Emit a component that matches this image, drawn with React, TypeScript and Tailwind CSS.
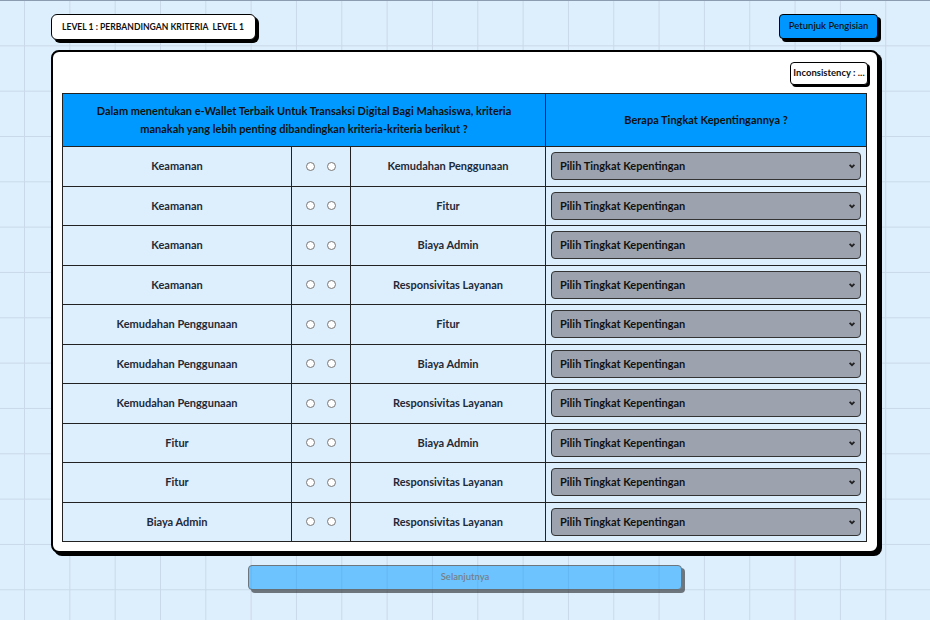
const pairs: [string, string][] = [
  ['Keamanan', 'Kemudahan Penggunaan'],
  ['Keamanan', 'Fitur'],
  ['Keamanan', 'Biaya Admin'],
  ['Keamanan', 'Responsivitas Layanan'],
  ['Kemudahan Penggunaan', 'Fitur'],
  ['Kemudahan Penggunaan', 'Biaya Admin'],
  ['Kemudahan Penggunaan', 'Responsivitas Layanan'],
  ['Fitur', 'Biaya Admin'],
  ['Fitur', 'Responsivitas Layanan'],
  ['Biaya Admin', 'Responsivitas Layanan'],
];

const Chevron = () => (
  <svg
    className="pointer-events-none absolute right-[5px] top-1/2 h-[8px] w-[8px] -translate-y-1/2"
    viewBox="0 0 10 10"
    fill="none"
    stroke="#222"
    strokeWidth="2.2"
  >
    <path d="M2 3.5 5 6.5 8 3.5" />
  </svg>
);

const App = () => {
  return (
    <div className="min-h-screen border-t border-[#8b9cb0] bg-[#ddeefc] bg-[linear-gradient(to_right,#c9d9e9_1px,transparent_1px),linear-gradient(to_bottom,#c9d9e9_1px,transparent_1px)] bg-[size:45.33px_45.33px] bg-[position:24px_-1px] pt-[13px] font-['Lato',sans-serif] text-[#1f2937]">
      <div className="mx-auto w-[828px]">
        <div className="flex items-start justify-between">
          <div className="flex h-[26px] w-[205px] items-center whitespace-pre rounded-md border-[1.5px] border-black bg-white pl-[10px] text-[8.6px] font-bold text-[#111] shadow-[3px_3px_0_#000]">
            {'LEVEL 1 : PERBANDINGAN KRITERIA  LEVEL 1'}
          </div>
          <button className="mr-[1px] flex h-[25px] w-[99px] items-center justify-center rounded-[4px] border-[1.5px] border-black bg-[#0096ff] text-[9.5px] font-semibold text-[#111] shadow-[3px_3px_0_#000]">
            Petunjuk Pengisian
          </button>
        </div>

        <div className="mt-[10px] rounded-lg border-2 border-black bg-white px-[9px] pb-[9px] pt-[10px] shadow-[3px_3px_0_#000]">
          <div className="flex justify-end">
            <div className="flex h-[23px] w-[78px] items-center justify-center whitespace-nowrap rounded-[4px] border-[1.5px] border-black bg-white text-[9.5px] font-bold text-[#111] shadow-[2px_2px_0_#000]">
              Inconsistency : ...
            </div>
          </div>

          <table className="mt-[8px] w-[804px] table-fixed border-collapse border-[1.5px] border-[#222] text-[11px] font-bold">
            <colgroup>
              <col className="w-[229px]" />
              <col className="w-[59px]" />
              <col className="w-[195px]" />
              <col className="w-[321px]" />
            </colgroup>
            <thead>
              <tr className="h-[53px] bg-[#0099ff] font-bold text-[#111]">
                <th colSpan={3} className="border border-[#222] px-8 leading-[18px]">
                  Dalam menentukan e-Wallet Terbaik Untuk Transaksi Digital Bagi Mahasiswa, kriteria manakah yang lebih penting dibandingkan kriteria-kriteria berikut ?
                </th>
                <th className="border border-[#222]">Berapa Tingkat Kepentingannya ?</th>
              </tr>
            </thead>
            <tbody>
              {pairs.map(([a, b], i) => (
                <tr key={i} className="h-[39.5px] bg-[#ddeefc]">
                  <td className="border border-[#222] text-center">{a}</td>
                  <td className="border border-[#222]">
                    <div className="flex items-center justify-center gap-[12px]">
                      <input type="radio" name={`p${i}`} className="h-[9px] w-[9px]" />
                      <input type="radio" name={`p${i}`} className="h-[9px] w-[9px]" />
                    </div>
                  </td>
                  <td className="border border-[#222] text-center">{b}</td>
                  <td className="border border-[#222] px-[5px]">
                    <div className="relative">
                      <select className="h-[28px] w-full appearance-none rounded-[4px] border-[1.5px] border-[#333] bg-[#9ca3af] pl-[8px] text-[11px] font-bold text-[#111]">
                        <option>Pilih Tingkat Kepentingan</option>
                      </select>
                      <Chevron />
                    </div>
                  </td>
                </tr>
              ))}
            </tbody>
          </table>
        </div>

        <div className="mt-[12px] flex justify-center">
          <button
            disabled
            className="h-[25px] w-[434px] rounded-[4px] border-[1.5px] border-black bg-[#0099ff] text-[9.5px] font-semibold text-[#111] opacity-50 shadow-[3px_3px_0_#000]"
          >
            Selanjutnya
          </button>
        </div>
      </div>
    </div>
  );
};

export default App;
